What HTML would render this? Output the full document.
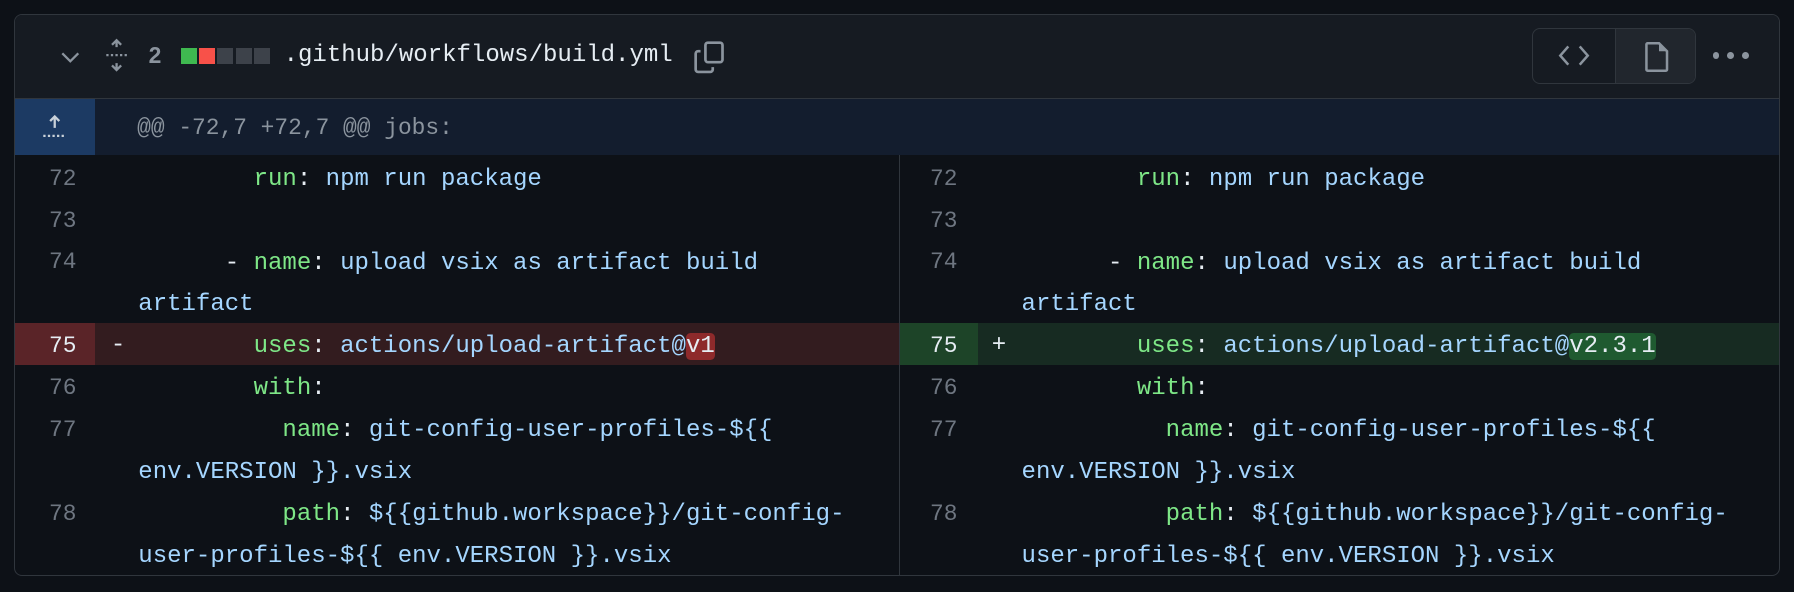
<!DOCTYPE html>
<html><head><meta charset="utf-8"><style>
html,body{margin:0;padding:0;background:#0d1117;}
body{zoom:1.14413;width:1568px;height:517px;overflow:hidden;position:relative;font-family:"Liberation Mono",monospace;}
.box{position:absolute;left:12px;top:12px;width:1542px;height:490px;border:1px solid #30363d;border-radius:7px;overflow:hidden;background:#0d1117;}
.hdr{position:absolute;left:0;top:0;width:100%;height:73px;background:#161b22;border-bottom:1px solid #30363d;}
.hunk{position:absolute;left:0;top:74px;width:100%;height:49px;background:#131d2e;}
.hunk .g{position:absolute;left:0;top:0;width:70px;height:49px;background:#1c3a63;}
.hunk .t{position:absolute;left:107px;top:14px;color:#8b949e;font-size:20px;}
.side{position:absolute;top:123px;height:367px;}
.l{left:0;width:773px;border-right:1px solid #30363d;}
.r{left:774px;width:768px;}
.row{position:relative;height:36.6px;}
.row.d2{height:73.2px;}
.n{position:absolute;left:0;width:54px;text-align:right;top:9px;color:#6e7681;font-size:20px;}
.r .n{width:50px;}
.c{position:absolute;left:108px;top:3px;white-space:pre;color:#a5d6ff;font-size:21px;line-height:36.6px;}
.r .c{left:106px;}
.k{color:#7ee787}
.w{color:#e6edf3}
.del{background:#331c1f}
.del .gut{position:absolute;left:0;top:0;width:70px;height:100%;background:#5a2428}
.add{background:#172b22}
.add .gut{position:absolute;left:0;top:0;width:68px;height:100%;background:#1d4428}
.del .n,.add .n{color:#e6edf3;z-index:1}
.m{position:absolute;left:84px;top:2px;line-height:36.6px;color:#e6edf3;font-size:21px;}
.r .m{left:80px;}
.hd{background:#8e2a2b;border-radius:4px;color:#e6edf3}
.ha{background:#1f5a30;border-radius:4px;color:#e6edf3}
.sq{display:block;width:14px;height:14px}
</style></head><body>
<div class="box">
 <div class="hdr">
  <svg style="position:absolute;left:40px;top:32px" width="18" height="12" viewBox="0 0 18 12"><path d="M2 2l7 7 7-7" stroke="#8b949e" stroke-width="2" fill="none"/></svg>
  <svg style="position:absolute;left:78px;top:20px" width="22" height="30" viewBox="0 0 22 30"><path d="M11 2v6M7 6l4-4 4 4M11 28v-6M7 24l4 4 4-4" stroke="#8b949e" stroke-width="2" fill="none"/><path d="M2 15h18" stroke="#8b949e" stroke-width="2" stroke-dasharray="2 2"/></svg>
  <span style="position:absolute;left:117px;top:24px;color:#8b949e;font-size:20px;font-weight:bold;font-family:'Liberation Sans',sans-serif">2</span>
  <div style="position:absolute;left:145px;top:29px;display:flex;gap:2px">
   <i class="sq" style="background:#3fb950"></i><i class="sq" style="background:#f85149"></i><i class="sq" style="background:#3d424a"></i><i class="sq" style="background:#3d424a"></i><i class="sq" style="background:#3d424a"></i>
  </div>
  <span style="position:absolute;left:235px;top:24px;color:#e6edf3;font-size:21px">.github/workflows/build.yml</span>
  <svg style="position:absolute;left:592px;top:21px" width="32" height="32" viewBox="0 0 30 30"><rect x="11" y="3" width="14" height="16" rx="2" stroke="#8b949e" stroke-width="2.2" fill="none"/><path d="M7 10H5a2 2 0 00-2 2v13a2 2 0 002 2h10a2 2 0 002-2v-2" stroke="#8b949e" stroke-width="2.2" fill="none"/></svg>
  <div style="position:absolute;left:1326px;top:12px;width:142px;height:47px;border:1px solid #30363d;border-radius:7px;overflow:hidden">
   <div style="position:absolute;left:72px;top:0;width:70px;height:47px;background:#21262d;border-left:1px solid #30363d"></div>
   <svg style="position:absolute;left:22px;top:12px" width="28" height="22" viewBox="0 0 28 22"><path d="M9 3L2 11l7 8M19 3l7 8-7 8" stroke="#8b949e" stroke-width="2.2" fill="none"/></svg>
   <svg style="position:absolute;left:96px;top:10px" width="24" height="28" viewBox="0 0 24 28"><path d="M4 2h10l7 7v16a1 1 0 01-1 1H4a1 1 0 01-1-1V3a1 1 0 011-1z" stroke="#8b949e" stroke-width="2.2" fill="none"/><path d="M14 2v7h7" fill="#8b949e"/></svg>
  </div>
  <div style="position:absolute;left:1484px;top:33px;display:flex;gap:7px"><i style="width:6px;height:6px;border-radius:3px;background:#8b949e"></i><i style="width:6px;height:6px;border-radius:3px;background:#8b949e"></i><i style="width:6px;height:6px;border-radius:3px;background:#8b949e"></i></div>
 </div>
 <div class="hunk"><div class="g"><svg style="position:absolute;left:23px;top:12px" width="24" height="24" viewBox="0 0 24 24"><path d="M12 3v10M8 7l4-4 4 4" stroke="#c9d1d9" stroke-width="2" fill="none"/><path d="M2 20h20" stroke="#c9d1d9" stroke-width="2" stroke-dasharray="2 2"/></svg></div><span class="t">@@ -72,7 +72,7 @@ jobs:</span></div>

 <div class="side l">
  <div class="row"><span class="n">72</span><span class="c">        <span class="k">run</span><span class="w">:</span> npm run package</span></div>
  <div class="row"><span class="n">73</span></div>
  <div class="row d2"><span class="n">74</span><span class="c">      <span class="w">-</span> <span class="k">name</span><span class="w">:</span> upload vsix as artifact build
artifact</span></div>
  <div class="row del"><div class="gut"></div><span class="n">75</span><span class="m">-</span><span class="c">        <span class="k">uses</span><span class="w">:</span> actions/upload-artifact@<span class="hd">v1</span></span></div>
  <div class="row"><span class="n">76</span><span class="c">        <span class="k">with</span><span class="w">:</span></span></div>
  <div class="row d2"><span class="n">77</span><span class="c">          <span class="k">name</span><span class="w">:</span> git-config-user-profiles-${{
env.VERSION }}.vsix</span></div>
  <div class="row d2"><span class="n">78</span><span class="c">          <span class="k">path</span><span class="w">:</span> ${{github.workspace}}/git-config-
user-profiles-${{ env.VERSION }}.vsix</span></div>
 </div>
 <div class="side r">
  <div class="row"><span class="n">72</span><span class="c">        <span class="k">run</span><span class="w">:</span> npm run package</span></div>
  <div class="row"><span class="n">73</span></div>
  <div class="row d2"><span class="n">74</span><span class="c">      <span class="w">-</span> <span class="k">name</span><span class="w">:</span> upload vsix as artifact build
artifact</span></div>
  <div class="row add"><div class="gut"></div><span class="n">75</span><span class="m">+</span><span class="c">        <span class="k">uses</span><span class="w">:</span> actions/upload-artifact@<span class="ha">v2.3.1</span></span></div>
  <div class="row"><span class="n">76</span><span class="c">        <span class="k">with</span><span class="w">:</span></span></div>
  <div class="row d2"><span class="n">77</span><span class="c">          <span class="k">name</span><span class="w">:</span> git-config-user-profiles-${{
env.VERSION }}.vsix</span></div>
  <div class="row d2"><span class="n">78</span><span class="c">          <span class="k">path</span><span class="w">:</span> ${{github.workspace}}/git-config-
user-profiles-${{ env.VERSION }}.vsix</span></div>
 </div>
</div>
</body></html>
